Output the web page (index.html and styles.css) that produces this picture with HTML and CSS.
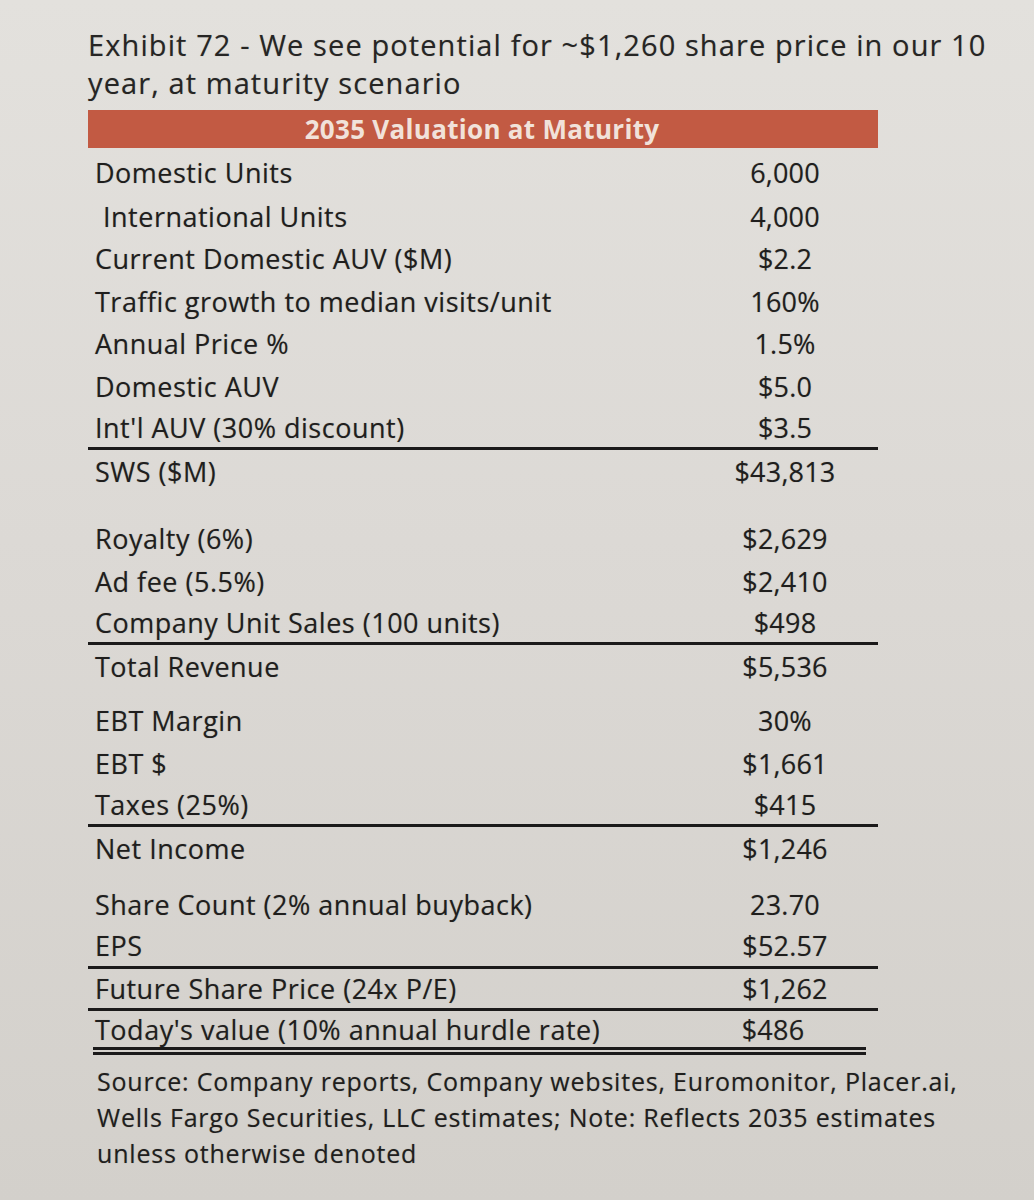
FILE: index.html
```html
<!DOCTYPE html>
<html>
<head>
<meta charset="utf-8">
<link rel="stylesheet" href="styles.css">
</head>
<body>
<div class="page">
  <h1 class="title">Exhibit 72 - We see potential for ~$1,260 share price in our 10 year, at maturity scenario</h1>
  <div class="table">
    <div class="head">2035 Valuation at Maturity</div>
    <div class="row first"><span>Domestic Units</span><span class="v">6,000</span></div>
    <div class="row"><span class="indent">International Units</span><span class="v">4,000</span></div>
    <div class="row"><span>Current Domestic AUV ($M)</span><span class="v">$2.2</span></div>
    <div class="row"><span>Traffic growth to median visits/unit</span><span class="v">160%</span></div>
    <div class="row"><span>Annual Price %</span><span class="v">1.5%</span></div>
    <div class="row"><span>Domestic AUV</span><span class="v">$5.0</span></div>
    <div class="row rule"><span>Int'l AUV (30% discount)</span><span class="v">$3.5</span></div>
    <div class="row"><span>SWS ($M)</span><span class="v">$43,813</span></div>
    <div class="spacer big"></div>
    <div class="row"><span>Royalty (6%)</span><span class="v">$2,629</span></div>
    <div class="row"><span>Ad fee (5.5%)</span><span class="v">$2,410</span></div>
    <div class="row rule"><span>Company Unit Sales (100 units)</span><span class="v">$498</span></div>
    <div class="row"><span>Total Revenue</span><span class="v">$5,536</span></div>
    <div class="spacer"></div>
    <div class="row"><span>EBT Margin</span><span class="v">30%</span></div>
    <div class="row"><span>EBT $</span><span class="v">$1,661</span></div>
    <div class="row rule"><span>Taxes (25%)</span><span class="v">$415</span></div>
    <div class="row"><span>Net Income</span><span class="v">$1,246</span></div>
    <div class="spacer low"></div>
    <div class="row"><span>Share Count (2% annual buyback)</span><span class="v">23.70</span></div>
    <div class="row rule"><span>EPS</span><span class="v">$52.57</span></div>
    <div class="row rule"><span>Future Share Price (24x P/E)</span><span class="v">$1,262</span></div>
    <div class="row last"><span>Today's value (10% annual hurdle rate)</span><span class="v">$486</span></div>
  </div>
  <p class="source">Source: Company reports, Company websites, Euromonitor, Placer.ai, Wells Fargo Securities, LLC estimates; Note: Reflects 2035 estimates unless otherwise denoted</p>
</div>
</body>
</html>
```
FILE: styles.css
```css
html, body {
  margin: 0;
  padding: 0;
}
body {
  width: 1034px;
  min-height: 1200px;
  background: linear-gradient(180deg, #e3e1dd 0%, #dcd9d5 45%, #d3d0cb 100%);
  font-family: "Open Sans", "Liberation Sans", Arial, sans-serif;
  color: #1f1e1d;
}
.page {
  padding: 26px 20px 0 88px;
}
.title {
  margin: 0;
  font-size: 29px;
  font-weight: normal;
  line-height: 38px;
  letter-spacing: 1.1px;
  color: #262524;
  width: 935px;
  text-shadow: 0 0 1px rgba(0,0,0,0.25);
}
.table {
  width: 790px;
  margin-top: 8px;
}
.head {
  height: 38px;
  line-height: 38px;
  background: #c25a43;
  color: #f1e2da;
  font-weight: bold;
  font-size: 26px;
  letter-spacing: 0.3px;
  text-align: center;
  padding-right: 2px;
}
.row {
  display: grid;
  grid-template-columns: 1fr 170px;
  align-items: center;
  height: 42.5px;
  padding: 0 8px 0 7px;
  font-size: 27px;
  letter-spacing: 0.5px;
  text-shadow: 0 0 1px rgba(0,0,0,0.3);
}
.row.first {
  height: 45px;
  padding-top: 2px;
}
.row .v {
  text-align: center;
  letter-spacing: 0.2px;
}
.row .indent {
  padding-left: 8px;
}
.rule {
  border-bottom: 3px solid #1b1a1a;
  height: 39.5px;
}
.spacer {
  height: 12px;
}
.spacer.low {
  height: 14px;
}
.spacer.big {
  height: 25px;
}
.row.last {
  height: 36px;
  border-bottom: 8px double #1b1a1a;
  margin-right: 12px;
  margin-left: 5px;
  padding-left: 2px;
}
.source {
  margin: 8px 0 0 9px;
  font-size: 25px;
  line-height: 36px;
  letter-spacing: 0.8px;
  width: 885px;
  color: #1f1e1d;
  text-shadow: 0 0 1px rgba(0,0,0,0.3);
}
```
